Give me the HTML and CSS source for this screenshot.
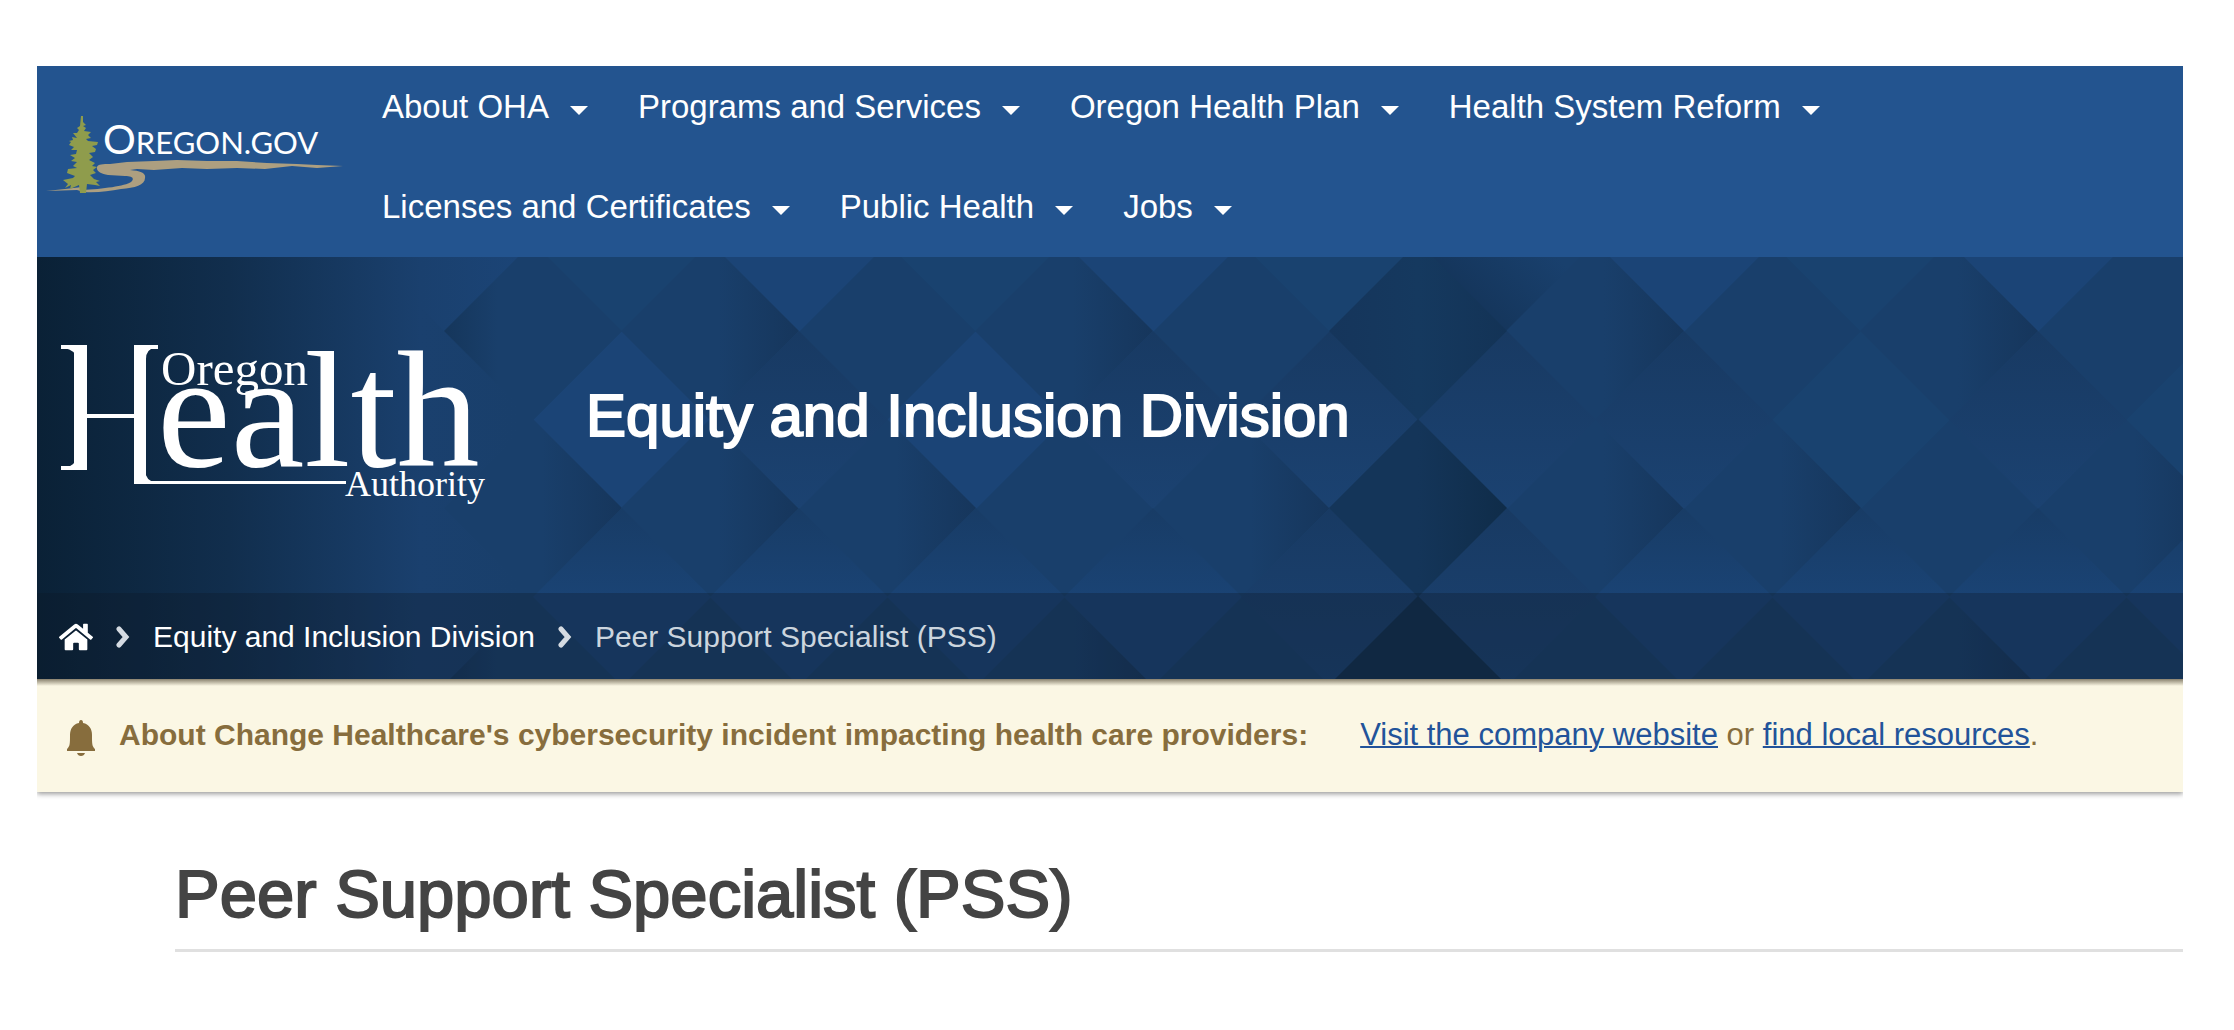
FILE: index.html
```html
<!DOCTYPE html>
<html lang="en">
<head>
<meta charset="utf-8">
<title>Oregon Health Authority : Peer Support Specialist (PSS)</title>
<link rel="stylesheet" href="styles.css">
</head>
<body>
<div class="page">
  <header>
    <div class="topbar">
      <a class="state-logo" href="#">
        <svg viewBox="0 0 310 90" role="img" aria-label="Oregon.gov">
          <path fill="#ad9f80" d="M9 79L28 77 45 75V78C66 77 88 74 94 70C98 66 95 64 88 64L71 63C64 62 59 59 60 55C61 52 66 52 73 52L90 50 117 49 140 48 170 49 200 49 230 51 260 52 280 53 306 54 280 56 255 54 228 57 200 56 170 57 145 56 117 58 100 57 93 58C104 59 109 61 108 66C108 73 98 76 84 77C72 79 60 81 47 80L40 78Z"/>
          <path fill="#8f9c4c" d="M44 4L46 4 46 10 49 13 46 14 49 16 47 19 54 20 51 23 54 26 49 27 51 29 61 30 60 33 55 34 59 37 58 40 52 41 56 45 52 48 58 51 55 54 60 55 56 58 59 61 53 63 57 67 63 69 59 70 63 74 58 73 50 72 49 81 43 81 42 73 33 77 34 73 28 76 31 72 26 68 36 66 38 64 30 61 31 57 40 56 36 54 40 50 34 49 38 46 33 43 39 42 40 38 34 38 37 35 32 33 34 30 32 29 36 28 35 25 40 26 36 21 40 21 42 18 40 16 43 14Z"/>
          <text class="state-name" x="66" y="42"><tspan class="state-initial">O</tspan>REGON.GOV</text>
        </svg>
      </a>
      <nav aria-label="Main">
        <ul class="menu">
          <li><button type="button">About OHA<span class="caret"></span></button></li>
          <li><button type="button">Programs and Services<span class="caret"></span></button></li>
          <li><button type="button">Oregon Health Plan<span class="caret"></span></button></li>
          <li><button type="button">Health System Reform<span class="caret"></span></button></li>
          <li><button type="button">Licenses and Certificates<span class="caret"></span></button></li>
          <li><button type="button">Public Health<span class="caret"></span></button></li>
          <li><button type="button">Jobs<span class="caret"></span></button></li>
        </ul>
      </nav>
    </div>
    <div class="banner">
      <svg class="pattern" aria-hidden="true">
        <defs>
          <linearGradient id="g-right"><stop offset=".55" stop-color="#193f6b"/><stop offset="1" stop-color="#16365c"/></linearGradient>
          <linearGradient id="g-left"><stop offset="0" stop-color="#15365b"/><stop offset=".3" stop-color="#193f6b"/></linearGradient>
          <linearGradient id="g-top" x2="0" y2="1"><stop offset="0" stop-color="#183a63"/><stop offset="1" stop-color="#1b4271"/></linearGradient>
          <linearGradient id="g-low" x2="0" y2="1"><stop offset="0" stop-color="#183c66"/><stop offset=".5" stop-color="#1a4374"/></linearGradient>
          <linearGradient id="g-dark"><stop offset="0" stop-color="#15355b"/><stop offset=".5" stop-color="#15395f"/><stop offset="1" stop-color="#133356"/></linearGradient>
          <linearGradient id="g-deep"><stop offset=".5" stop-color="#143559"/><stop offset="1" stop-color="#0f2c49"/></linearGradient>
          <linearGradient id="g-corner" x1="0" y1="1" x2=".6" y2=".4"><stop offset=".3" stop-color="#143459"/><stop offset="1" stop-color="#19406d"/></linearGradient>
          <linearGradient id="g-shade"><stop offset="0" stop-color="#0a2136"/><stop offset=".4" stop-color="#112e4d"/><stop offset=".8" stop-color="#1a406e"/><stop offset="1" stop-color="#1a406e" stop-opacity="0"/></linearGradient>
          <path id="d" d="M0-89L89 0 0 89-89 0z"/>
        </defs>
        <rect width="100%" height="100%" fill="#193f6b"/>
        <g fill="#1b4476">
          <use href="#d" x="408" y="-14"/><use href="#d" x="762" y="-14"/><use href="#d" x="1116" y="-14"/><use href="#d" x="1647" y="-14"/><use href="#d" x="2001" y="-14"/>
          <use href="#d" x="585" y="163"/><use href="#d" x="939" y="163"/>
        </g>
        <g fill="#19426f">
          <use href="#d" x="585" y="-14"/><use href="#d" x="939" y="-14"/><use href="#d" x="1293" y="-14"/><use href="#d" x="1824" y="-14"/>
          <use href="#d" x="1824" y="163"/><use href="#d" x="2178" y="163"/>
        </g>
        <use href="#d" x="1470" y="-14" fill="url(#g-corner)"/>
        <rect width="480" height="100%" fill="url(#g-shade)"/>
        <g fill="url(#g-left)"><use href="#d" x="496" y="74"/><use href="#d" x="496" y="428"/></g>
        <g fill="url(#g-right)">
          <use href="#d" x="673" y="74"/><use href="#d" x="1027" y="74"/><use href="#d" x="1558" y="74"/><use href="#d" x="1912" y="74"/>
          <use href="#d" x="496" y="251"/><use href="#d" x="673" y="251"/><use href="#d" x="850" y="251"/><use href="#d" x="1204" y="251"/><use href="#d" x="1558" y="251"/><use href="#d" x="1735" y="251"/><use href="#d" x="2089" y="251"/>
          <use href="#d" x="1027" y="428"/><use href="#d" x="1912" y="428"/>
        </g>
        <g fill="url(#g-top)">
          <use href="#d" x="762" y="163"/><use href="#d" x="1116" y="163"/><use href="#d" x="1293" y="163"/><use href="#d" x="1470" y="163"/><use href="#d" x="1647" y="163"/><use href="#d" x="2001" y="163"/>
        </g>
        <g fill="url(#g-low)">
          <use href="#d" x="585" y="340"/><use href="#d" x="762" y="340"/><use href="#d" x="939" y="340"/><use href="#d" x="1116" y="340"/><use href="#d" x="1647" y="340"/><use href="#d" x="1824" y="340"/><use href="#d" x="2001" y="340"/><use href="#d" x="2178" y="340"/>
        </g>
        <g fill="url(#g-top)"><use href="#d" x="1293" y="340"/><use href="#d" x="1470" y="340"/></g>
        <use href="#d" x="1381" y="74" fill="url(#g-dark)"/>
        <use href="#d" x="1381" y="251" fill="url(#g-deep)"/>
        <use href="#d" x="1381" y="428" fill="#12304f"/>
      </svg>
      <div class="hero">
        <a class="agency-logo" href="#">
          <svg viewBox="0 0 430 164" role="img" aria-label="Oregon Health Authority">
            <g fill="none" stroke="#fff">
              <path stroke-width="13" d="M20.500 2V127"/>
              <path stroke-width="12" d="M80 2V141"/>
              <path stroke-width="4" d="M1 4H20M1 125H20M80 4H98M26 73H76"/>
              <path stroke-width="3" d="M80 139.500H286"/>
            </g>
            <path fill="#fff" d="M4 4h12v12q0-9-12-11zM4 126h12v-12q0 9-12 11zM84 4h12q-10 2-10 12h-2zM85 128q1 10 10 11H84z"/>
            <text class="agency-main" x="97" y="123">ealth</text>
            <text class="agency-top" x="101" y="42">Oregon</text>
            <text class="agency-sub" x="285" y="153">Authority</text>
          </svg>
        </a>
        <p class="division">Equity and Inclusion Division</p>
      </div>
      <nav class="crumbs" aria-label="Breadcrumb">
        <a href="#" aria-label="Home"><svg class="home" viewBox="0 0 576 512"><path fill="#fff" d="M280.370 148.260L96 300.110V464a16 16 0 0 0 16 16l112.060-.290a16 16 0 0 0 15.920-16V368a16 16 0 0 1 16-16h64a16 16 0 0 1 16 16v95.640a16 16 0 0 0 16 16.050L464 480a16 16 0 0 0 16-16V300L295.670 148.260a12.190 12.190 0 0 0-15.300 0zM571.600 251.470L488 182.560V44.050a12 12 0 0 0-12-12h-56a12 12 0 0 0-12 12v72.610L318.470 43a48 48 0 0 0-61 0L4.340 251.470a12 12 0 0 0-1.600 16.900l25.500 31A12 12 0 0 0 45.150 301l235.220-193.740a12.190 12.190 0 0 1 15.300 0L530.900 301a12 12 0 0 0 16.900-1.600l25.500-31a12 12 0 0 0-1.700-16.930z"/></svg></a>
        <svg class="sep" viewBox="0 0 14 22"><path d="M3 3l7 8-7 8"/></svg>
        <a href="#">Equity and Inclusion Division</a>
        <svg class="sep" viewBox="0 0 14 22"><path d="M3 3l7 8-7 8"/></svg>
        <span class="current" aria-current="page">Peer Support Specialist (PSS)</span>
      </nav>
    </div>
  </header>
  <section class="alert">
    <svg class="bell" viewBox="0 0 30 36"><path fill="#876d3d" d="M15 0q2 0 2 3c6 1 9 6 9 12 0 9 0 11 3 14v2H1v-2c3-3 3-5 3-14C4 9 7 4 13 3q0-3 2-3zM11 33h8q-1 3-4 3t-4-3z"/></svg>
    <strong>About Change Healthcare's cybersecurity incident impacting health care providers:</strong>
    <p><a href="#">Visit the company website</a> or <a href="#">find local resources</a>.</p>
  </section>
  <main>
    <h1>Peer Support Specialist (PSS)</h1>
  </main>
</div>
</body>
</html>
```
FILE: styles.css
```css
* { box-sizing: border-box; }

body {
  margin: 0;
  background: #fff;
  color: #444;
  font-family: "Liberation Sans", Arial, sans-serif;
}

p, ul, h1 { margin: 0; padding: 0; }
svg { display: block; }

.page { margin: 66px 51px 0 37px; }

/* Top navigation */
.topbar {
  display: flex;
  align-items: flex-start;
  padding: 16px 0 25px;
  background: #23548f;
}

.state-logo {
  flex: none;
  width: 310px;
  margin: 30px 35px 0 0;
}

.state-logo svg, .agency-logo svg { overflow: visible; }
.state-name { fill: #fff; font: 31px Lato, sans-serif; }
.state-initial { font-size: 41px; }

.menu {
  display: flex;
  flex-wrap: wrap;
  gap: 50px;
  list-style: none;
}

.menu button {
  display: flex;
  align-items: center;
  gap: 21px;
  padding: 0;
  border: 0;
  background: none;
  color: #fff;
  font: 33px/50px "Liberation Sans", Arial, sans-serif;
}

.caret {
  margin-top: 6px;
  border: 9px solid transparent;
  border-top-color: #fff;
  border-bottom: 0;
}

/* Banner */
.banner { position: relative; overflow: hidden; }

.pattern {
  position: absolute;
  inset: 0;
  width: 100%;
  height: 100%;
}

.hero {
  position: relative;
  display: flex;
  align-items: center;
  min-height: 336px;
  padding-left: 23px;
}

.agency-logo { flex: none; width: 430px; margin-right: 96px; }
.agency-logo text { fill: #fff; font-family: "Liberation Serif", serif; }
.agency-logo .agency-main { font-size: 166px; }
.agency-logo .agency-top { font-size: 49px; }
.agency-logo .agency-sub { font-size: 36px; }

.division {
  padding-bottom: 18px;
  color: #fff;
  font-size: 60px;
  line-height: 72px;
  -webkit-text-stroke: 2px #fff;
}

.crumbs {
  position: relative;
  display: flex;
  align-items: center;
  gap: 23px;
  min-height: 86px;
  padding: 1px 22px 0;
  background: rgba(12, 24, 36, 0.3);
  color: #fff;
  font-size: 30px;
  line-height: 40px;
}

.crumbs a { color: #fff; text-decoration: none; }
.crumbs .current { color: #ccd5de; }
.home { width: 34px; height: 34px; }
.sep { width: 14px; height: 22px; fill: none; stroke: #d5dbe2; stroke-width: 5px; stroke-linecap: round; }

/* Alert */
.alert {
  position: relative;
  display: flex;
  align-items: center;
  min-height: 113px;
  padding: 0 29px 2px;
  background: linear-gradient(rgba(60, 50, 30, 0.6), rgba(60, 50, 30, 0) 7px) #fbf7e4;
  box-shadow: 0 2px 5px rgba(0, 0, 0, 0.4);
  clip-path: inset(0 0 -10px 0);
  color: #876d3d;
  font-size: 31px;
  line-height: 40px;
}

.alert strong { margin: 0 52px 0 23px; font-size: 30px; }
.alert a { color: #22539a; text-decoration-thickness: 2px; }
.bell { flex: none; width: 30px; height: 36px; margin-top: 6px; }

/* Content */
main { padding: 62px 0 0 138px; }

h1 {
  padding-bottom: 15px;
  border-bottom: 3px solid #e0e0e0;
  font-size: 67px;
  font-weight: 400;
  line-height: 80px;
  -webkit-text-stroke: 2px #444;
}
```
